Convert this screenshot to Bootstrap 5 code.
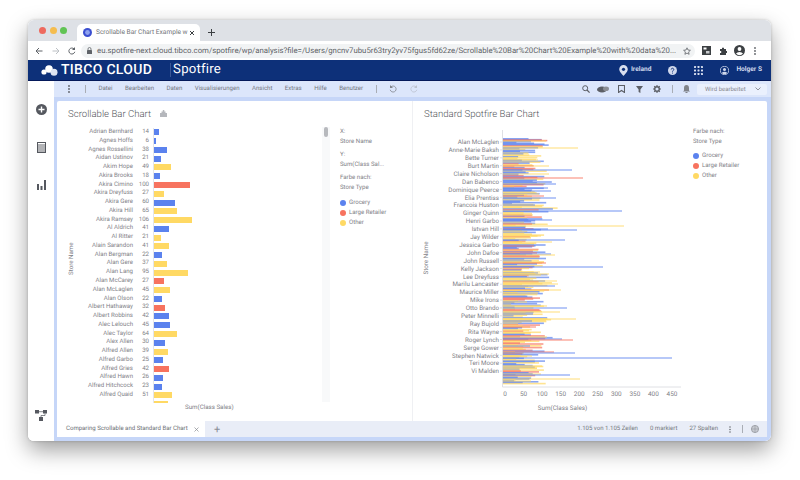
<!DOCTYPE html>
<html lang="de">

<head>
  <meta charset="UTF-8" />
  <meta name="viewport" content="width=device-width, initial-scale=1" />
  <title>Scrollable Bar Chart Example</title>
  <link href="https://cdn.jsdelivr.net/npm/bootstrap@5.3.0/dist/css/bootstrap.min.css" rel="stylesheet" />
  <style>
    html, body { height: 480px; overflow: hidden; background: #fff; }
    body { font-family: Roboto, "Liberation Sans", sans-serif; font-size: 6.1px; color: #7f8187; text-rendering: geometricPrecision; }
    svg { display: block; flex: none; }

    .win { width: 743px; height: 421px; margin: 20px 0 0 28px; border-radius: 6px; overflow: hidden; background: #fff; }
    .win-shadow { width: 743px; height: 421px; border-radius: 6px; box-shadow: 0 9px 22px rgba(0, 0, 0, .38), 0 0 3px rgba(0, 0, 0, .2); }

    /* browser chrome */
    .tabstrip { height: 21px; background: #dee1e6; padding-left: 49px; }
    .dot-light { position: absolute; top: 7px; width: 7px; height: 7px; border-radius: 50%; }
    .browser-tab { width: 123px; height: 17px; margin-top: 4px; background: #fff; border-radius: 5px 5px 0 0; padding: 0 5px 0 6px; color: #6f7378; font-size: 6.6px; white-space: nowrap; }
    .tab-name { margin-left: 4px; }
    .urlbar { height: 19px; background: #fff; padding-left: 7px; }
    .url-pill { width: 614px; height: 14px; background: #f1f3f4; border-radius: 7px; margin-left: 5px; padding-left: 6px; color: #5f6368; font-size: 7.8px; white-space: nowrap; }
    .url-text { margin-left: 5px; }

    /* tibco header */
    .top-head { height: 21px; background: #0d3079; border-bottom: 1px solid #04195a; padding-left: 13px; color: #fff; }
    .brand { font-size: 14px; font-weight: 500; letter-spacing: .3px; margin-left: 1px; line-height: 1; }
    .brand-sep { width: 1px; height: 14px; background: #3a5796; margin-left: 18px; }
    .product { font-size: 13.2px; margin-left: 2px; font-weight: 400; letter-spacing: .2px; }
    .head-right { margin-left: auto; padding-right: 9px; font-size: 6.6px; font-weight: 700; color: #cfd8ec; }

    /* app */
    .app { height: 360px; }
    .side-rail { width: 26px; background: #fff; padding-top: 23px; }
    .side-rail svg + svg { margin-top: 27px; }
    .work { width: 717px; background: #c6d6f8; }
    .menu-row { height: 16px; background: #dce6fb; color: #74777f; font-size: 6.1px; padding-left: 14px; }
    .menu-row .mi { margin-right: 12.4px; }
    .vsep { width: 1px; height: 8px; background: #a9adb5; }
    .mode-box { width: 70px; height: 11px; background: #eaf0fd; border-radius: 2px; margin: 0 4px 0 7px; padding: 0 6px 0 8px; font-size: 6px; color: #85878d; }
    .sheet { height: 320px; margin: 4px 4px 0 3px; background: #fff; border-radius: 2px 2px 0 0; }
    .viz-left { width: 356px; border-right: 1px solid #eff0f3; }
    .viz-right { flex: 1; position: relative; }
    .viz-title { font-size: 9.6px; font-weight: 300; color: #55585d; line-height: 1; padding: 9px 0 0 11px; height: 27px; white-space: nowrap; }
    .axis-y { writing-mode: vertical-rl; transform: rotate(180deg); font-size: 6.2px; width: 10px; text-align: center; margin-left: 10px; padding-top: 13px; }
    .axis-x { font-size: 6.2px; line-height: 1; margin: 0; padding-left: 128px; padding-top: 1px; }

    .rows-wrap { width: 245px; height: 275px; overflow: hidden; position: relative; }
    .rows-wrap::before { content: ""; position: absolute; left: 76px; top: 0; bottom: 0; width: 1px; background: #e4e5e9; }
    .bar-row { height: 8.77px; line-height: 8.77px; white-space: nowrap; }
    .bar-name, .bar-val { font-size: 6.1px; }
    .bar-name { width: 56px; text-align: right; flex: none; direction: rtl; }
    .bar-val { width: 16px; text-align: right; flex: none; margin-right: 5px; }
    .bar-fill { height: 6px; }
    .c-grocery { background: #5b82ee; }
    .c-retail { background: #f7735f; }
    .c-other { background: #ffd964; }

    .scroll-track { width: 8px; height: 275px; background: #f8f9fa; padding: 0 2px; flex: none; }
    .scroll-thumb { height: 10px; background: #b7b9bd; border-radius: 3px; }
    .legend-box { font-size: 6.1px; line-height: 10px; padding-left: 10px; white-space: nowrap; }
    .leg-gap { height: 3px; }
    .leg-item { height: 10.2px; }
    .leg-dot { width: 6px; height: 6px; border-radius: 50%; margin-right: 3px; flex: none; }
    .legend-right { position: absolute; left: 280px; top: 26px; }

    /* bottom tabs */
    .tabs-row { height: 16px; background: #e9edf7; font-size: 6.05px; color: #6b6e74; margin: 0 4px 0 3px; white-space: nowrap; }
    .sheet-tab { width: 148px; height: 16px; background: #fff; padding-left: 9px; }
    .sheet-plus { margin-left: 9px; color: #8b8f97; font-size: 11px; line-height: 1; }
    .status-box { margin-left: auto; padding-right: 8px; color: #777a80; }
  </style>
</head>

<body>

  <div class="win-shadow position-absolute" style="left:28px;top:20px"></div>
  <div class="win position-relative d-flex flex-column">

    <!-- Browser tabs -->
    <div class="tabstrip d-flex align-items-start position-relative">
      <span class="dot-light" style="left:11px;background:#ee6a5f"></span>
      <span class="dot-light" style="left:22px;background:#f5bd4f"></span>
      <span class="dot-light" style="left:32px;background:#61c454"></span>
      <div class="browser-tab d-flex align-items-center">
        <svg width="9" height="9" viewBox="0 0 9 9"><circle cx="4.5" cy="4.5" r="4.5" fill="#3b4fd0"/><circle cx="4.5" cy="4.5" r="2.4" fill="#8fa2ee"/></svg>
        <span class="tab-name">Scrollable Bar Chart Example w</span>
        <svg class="ms-auto" width="6" height="6" viewBox="0 0 6 6"><path d="M1 1l4 4M5 1l-4 4" stroke="#3c4043" stroke-width="1"/></svg>
      </div>
      <svg class="ms-2" style="margin-top:9px" width="7" height="7" viewBox="0 0 7 7"><path d="M3.5 0v7M0 3.5h7" stroke="#3c4043" stroke-width="1"/></svg>
    </div>

    <!-- Address bar -->
    <div class="urlbar d-flex align-items-center">
      <svg width="8" height="8" viewBox="0 0 8 8"><path d="M7.5 4H1M4 1L1 4l3 3" fill="none" stroke="#5f6368"/></svg>
      <svg style="margin-left:9px" width="8" height="8" viewBox="0 0 8 8"><path d="M.5 4H7M4 1l3 3-3 3" fill="none" stroke="#bcc0c4"/></svg>
      <svg style="margin-left:8px" width="8" height="8" viewBox="0 0 8 8"><path d="M6.8 4.8A3 3 0 1 1 6 1.9" fill="none" stroke="#5f6368"/><path d="M7 0v3H4z" fill="#5f6368"/></svg>
      <div class="url-pill d-flex align-items-center">
        <svg width="5" height="7" viewBox="0 0 5 7"><rect y="3" width="5" height="4" rx=".6" fill="#5f6368"/><path d="M1 3V2a1.5 1.5 0 0 1 3 0v1" fill="none" stroke="#5f6368" stroke-width=".8"/></svg>
        <span class="url-text">eu.spotfire-next.cloud.tibco.com/spotfire/wp/analysis?file=/Users/gncnv7ubu5r63try2yv75fgus5fd62ze/Scrollable%20Bar%20Chart%20Example%20with%20data%20...</span>
        <svg class="ms-auto me-1" width="8" height="8" viewBox="0 0 8 8"><path d="M4 .8l1 2.2 2.4.3-1.8 1.6.5 2.4L4 6.1 1.900 7.300l.5-2.400L.6 3.300 3 3z" fill="none" stroke="#5f6368" stroke-width=".8"/></svg>
      </div>
      <svg style="margin-left:7px" width="9" height="9" viewBox="0 0 9 9"><rect width="9" height="9" fill="#3c4043"/><rect x="1.500" y="1.500" width="3" height="2" fill="#fff"/><rect x="4" y="5" width="3.500" height="2.500" fill="#c9cbce"/></svg>
      <svg style="margin-left:8px" width="8" height="8" viewBox="0 0 8 8"><path d="M1 2h2V.8h2V2h2v2h1v2H7v2H1V6h1.200V4H1z" fill="#3c4043"/></svg>
      <svg style="margin-left:7px" width="11" height="11" viewBox="0 0 11 11"><circle cx="5.500" cy="5.500" r="5.500" fill="#3c4043"/><circle cx="5.500" cy="4" r="1.900" fill="#fff"/><path d="M2 8.500a4 3 0 0 1 7 0 4.500 4.500 0 0 1-7 0z" fill="#fff"/></svg>
      <svg style="margin-left:9px" width="2" height="8" viewBox="0 0 2 8"><circle cx="1" cy="1" r=".9" fill="#5f6368"/><circle cx="1" cy="4" r=".9" fill="#5f6368"/><circle cx="1" cy="7" r=".9" fill="#5f6368"/></svg>
    </div>

    <!-- TIBCO header -->
    <div class="top-head d-flex align-items-center">
      <svg width="19" height="11" viewBox="0 0 19 11"><circle cx="3" cy="7" r="2.600" fill="#fff"/><circle cx="8" cy="4" r="3.800" fill="#fff"/><circle cx="13" cy="7.200" r="3.500" fill="#dfe5f2"/></svg>
      <span class="brand">TIBCO CLOUD</span>
      <span class="brand-sep"></span>
      <span class="product">Spotfire</span>
      <div class="head-right d-flex align-items-center">
        <svg width="9" height="11" viewBox="0 0 9 11"><path d="M4.500 0a4.300 4.300 0 0 1 4.300 4.300C8.800 7 4.500 11 4.500 11S.2 7 .2 4.300A4.300 4.300 0 0 1 4.500 0z" fill="#d8dfef"/><circle cx="4.500" cy="4.300" r="1.600" fill="#0d3079"/></svg>
        <span style="margin-left:3px">Ireland</span>
        <svg style="margin-left:17px" width="9" height="9" viewBox="0 0 9 9"><circle cx="4.500" cy="4.500" r="4.500" fill="#cfd8ec"/><path d="M3.200 3.500a1.300 1.300 0 1 1 1.900 1.200c-.4.200-.6.400-.6.900" fill="none" stroke="#0d3079" stroke-width=".9"/><circle cx="4.500" cy="7" r=".55" fill="#0d3079"/></svg>
        <svg style="margin-left:17px" width="9" height="9" viewBox="0 0 9 9" fill="#d8dfef"><rect width="2" height="2" rx=".4"/><rect x="3.500" width="2" height="2" rx=".4"/><rect x="7" width="2" height="2" rx=".4"/><rect y="3.500" width="2" height="2" rx=".4"/><rect x="3.500" y="3.500" width="2" height="2" rx=".4"/><rect x="7" y="3.500" width="2" height="2" rx=".4"/><rect y="7" width="2" height="2" rx=".4"/><rect x="3.500" y="7" width="2" height="2" rx=".4"/><rect x="7" y="7" width="2" height="2" rx=".4"/></svg>
        <svg style="margin-left:17px" width="9" height="9" viewBox="0 0 9 9"><circle cx="4.500" cy="4.500" r="4.100" fill="none" stroke="#cfd8ec" stroke-width=".8"/><circle cx="4.500" cy="3.500" r="1.500" fill="#cfd8ec"/><path d="M1.800 7a3 2.200 0 0 1 5.400 0 3.800 3.800 0 0 1-5.400 0z" fill="#cfd8ec"/></svg>
        <span style="margin-left:7px">Holger S</span>
      </div>
    </div>

    <div class="app d-flex">

      <!-- Left rail -->
      <div class="side-rail d-flex flex-column align-items-center position-relative">
        <svg width="11" height="11" viewBox="0 0 11 11"><circle cx="5.500" cy="5.500" r="5.500" fill="#55585f"/><path d="M5.500 2.500v6M2.500 5.500h6" stroke="#fff" stroke-width="1.400"/></svg>
        <svg width="9" height="11" viewBox="0 0 9 11"><rect x=".5" y=".5" width="8" height="10" fill="none" stroke="#55585f"/><path d="M.5 3h8M.5 5h8M.5 7h8M.5 9h8" stroke="#55585f" stroke-width=".9"/></svg>
        <svg width="9" height="10" viewBox="0 0 9 10" fill="#55585f"><rect y="4" width="2" height="6"/><rect x="3.500" y="6" width="2" height="4"/><rect x="7" width="2" height="10"/></svg>
        <svg class="position-absolute" style="left:7px;bottom:20px;margin:0" width="12" height="11" viewBox="0 0 12 11"><g fill="#55585f"><rect width="4" height="3.500"/><rect x="8" width="4" height="3.500"/><rect x="4" y="7" width="4" height="4"/></g><path d="M4 1.700h4M10 3.500v2H6v1.500" fill="none" stroke="#55585f" stroke-width=".7"/></svg>
      </div>

      <div class="work d-flex flex-column">

        <!-- Menu -->
        <div class="menu-row d-flex align-items-center">
          <svg width="2" height="8" viewBox="0 0 2 8"><circle cx="1" cy="1" r=".9" fill="#5c5f66"/><circle cx="1" cy="4" r=".9" fill="#5c5f66"/><circle cx="1" cy="7" r=".9" fill="#5c5f66"/></svg>
          <span class="vsep" style="margin:0 12.500px 0 15px"></span>
          <span class="mi">Datei</span><span class="mi">Bearbeiten</span><span class="mi">Daten</span><span class="mi">Visualisierungen</span><span class="mi">Ansicht</span><span class="mi">Extras</span><span class="mi">Hilfe</span><span class="mi">Benutzer</span>
          <span class="vsep"></span>
          <svg style="margin-left:12px" width="8" height="8" viewBox="0 0 8 8"><path d="M1.200 4.800A3 3 0 1 0 2 1.900" fill="none" stroke="#82858c" stroke-width=".8"/><path d="M1 0v3h3z" fill="#82858c"/></svg>
          <svg style="margin-left:13px" width="8" height="8" viewBox="0 0 8 8"><path d="M6.800 4.800A3 3 0 1 1 6 1.900" fill="none" stroke="#bcc2cf" stroke-width=".8"/><path d="M7 0v3H4z" fill="#bcc2cf"/></svg>

          <div class="ms-auto d-flex align-items-center">
            <svg width="8" height="8" viewBox="0 0 8 8"><circle cx="3.200" cy="3.200" r="2.500" fill="none" stroke="#5c5f66" stroke-width="1"/><path d="M5 5l2.600 2.600" stroke="#5c5f66" stroke-width="1.200"/></svg>
            <svg style="margin-left:7px" width="12" height="7" viewBox="0 0 12 7"><ellipse cx="5" cy="3.500" rx="5" ry="3" fill="#5c5f66"/><ellipse cx="9" cy="2.800" rx="3" ry="2.300" fill="#8b8e95"/></svg>
            <svg style="margin-left:9px" width="7" height="8" viewBox="0 0 7 8"><path d="M.5.500h6v7L3.500 5.500.5 7.500z" fill="none" stroke="#5c5f66" stroke-width="1.100"/></svg>
            <svg style="margin-left:11px" width="7" height="7" viewBox="0 0 7 7"><path d="M0 0h7L4.400 3.400V7L2.600 6V3.400z" fill="#5c5f66"/></svg>
            <svg style="margin-left:10px" width="8" height="8" viewBox="0 0 8 8"><circle cx="4" cy="4" r="2.300" fill="none" stroke="#5c5f66" stroke-width="1.400"/><path d="M4 0v1.500M4 6.500V8M0 4h1.500M6.500 4H8M1.200 1.200l1 1M5.800 5.800l1 1M6.800 1.200l-1 1M2.200 5.800l-1 1" stroke="#5c5f66" stroke-width="1.100"/></svg>
            <span class="vsep" style="margin-left:11px"></span>
            <svg style="margin-left:10px" width="7" height="8" viewBox="0 0 7 8"><path d="M3.500 0C5.200 0 6 1.300 6 3v2.500l1 1H0l1-1V3C1 1.300 1.800 0 3.500 0z" fill="#80838a"/><rect x="2.500" y="7" width="2" height="1" fill="#80838a"/></svg>
            <div class="mode-box d-flex align-items-center justify-content-between">
              <span>Wird bearbeitet</span>
              <svg width="6" height="4" viewBox="0 0 6 4"><path d="M.5.500L3 3 5.500.500" fill="none" stroke="#777a80" stroke-width=".8"/></svg>
            </div>
          </div>
        </div>

        <div class="sheet d-flex">

          <!-- Scrollable chart -->
          <div class="viz-left d-flex">
            <div style="width:265px">
              <div class="viz-title d-flex align-items-start">Scrollable Bar Chart
                <svg style="margin-left:9px" width="7" height="7" viewBox="0 0 7 7"><path d="M0 3h1.500V1.500h1.300V0h1.500v1.500h1.200V3H7v4H0z" fill="#b5b7bc"/></svg>
              </div>
              <div class="d-flex">
                <div class="axis-y">Store Name</div>
                <div class="rows-wrap" id="filas"></div>
              </div>
              <p class="axis-x">Sum(Class Sales)</p>
            </div>
            <div style="padding-top:26px"><div class="scroll-track"><div class="scroll-thumb"></div></div></div>
            <div class="legend-box" style="padding-top:26px">
              <div>X:</div><div>Store Name</div><div class="leg-gap"></div>
              <div>Y:</div><div>Sum(Class Sal...</div><div class="leg-gap"></div>
              <div>Farbe nach:</div><div>Store Type</div>
              <div style="height:5px"></div>
              <div class="leg-item d-flex align-items-center"><span class="leg-dot c-grocery"></span>Grocery</div>
              <div class="leg-item d-flex align-items-center"><span class="leg-dot c-retail"></span>Large Retailer</div>
              <div class="leg-item d-flex align-items-center"><span class="leg-dot c-other"></span>Other</div>
            </div>
          </div>

          <!-- Standard chart -->
          <div class="viz-right">
            <div class="viz-title">Standard Spotfire Bar Chart</div>
            <svg id="grafico" class="position-absolute" style="left:10px;top:24px" width="270" height="290" viewBox="424 125 270 290"></svg>
            <div class="legend-box legend-right" style="padding-left:0">
              <div>Farbe nach:</div><div>Store Type</div>
              <div style="height:4px"></div>
              <div class="leg-item d-flex align-items-center"><span class="leg-dot c-grocery"></span>Grocery</div>
              <div class="leg-item d-flex align-items-center"><span class="leg-dot c-retail"></span>Large Retailer</div>
              <div class="leg-item d-flex align-items-center"><span class="leg-dot c-other"></span>Other</div>
            </div>
          </div>
        </div>

        <!-- Page tabs and status -->
        <div class="tabs-row d-flex align-items-center">
          <div class="sheet-tab d-flex align-items-center">
            <span>Comparing Scrollable and Standard Bar Chart</span>
            <svg style="margin-left:6px" width="5" height="5" viewBox="0 0 5 5"><path d="M.5.500l4 4M4.500.500l-4 4" stroke="#888b91" stroke-width=".7"/></svg>
          </div>
          <span class="sheet-plus">+</span>
          <div class="status-box d-flex align-items-center">
            <span>1.105 von 1.105 Zeilen</span>
            <span style="margin-left:12px">0 markiert</span>
            <span style="margin-left:12px">27 Spalten</span>
            <svg style="margin-left:11px" width="2" height="7" viewBox="0 0 2 7"><circle cx="1" cy="1" r=".8" fill="#6b6e74"/><circle cx="1" cy="3.500" r=".8" fill="#6b6e74"/><circle cx="1" cy="6" r=".8" fill="#6b6e74"/></svg>
            <span class="vsep" style="margin-left:11px"></span>
            <svg style="margin-left:8px" width="8" height="8" viewBox="0 0 8 8"><circle cx="4" cy="4" r="3.600" fill="#c9ccd2" stroke="#8b8e95" stroke-width=".7"/><path d="M4 .5v7M.5 4h7" stroke="#8b8e95" stroke-width=".5"/></svg>
          </div>
        </div>
      </div>
    </div>
  </div>

  <script>
    // Datos del gráfico con scroll: nombre, valor, tipo
    const filas = [
      ['Adrian Bernhard', 14, 'g'], ['Agnes Hoffs', 6, 'g'], ['Agnes Rossellini', 38, 'g'], ['Aidan Ustinov', 21, 'g'],
      ['Akim Hope', 49, 'o'], ['Akira Brooks', 18, 'g'], ['Akira Cimino', 100, 'r'], ['Akira Dreyfuss', 27, 'o'],
      ['Akira Gere', 60, 'g'], ['Akira Hill', 65, 'o'], ['Akira Ramsey', 106, 'o'], ['Al Aldrich', 41, 'g'],
      ['Al Ritter', 21, 'o'], ['Alain Sarandon', 41, 'o'], ['Alan Bergman', 22, 'g'], ['Alan Gere', 37, 'o'],
      ['Alan Lang', 95, 'o'], ['Alan McCarey', 27, 'r'], ['Alan McLaglen', 45, 'o'], ['Alan Olson', 22, 'g'],
      ['Albert Hathaway', 32, 'r'], ['Albert Robbins', 42, 'g'], ['Alec Lelouch', 45, 'g'], ['Alec Taylor', 64, 'o'],
      ['Alex Allen', 30, 'g'], ['Alfred Allen', 39, 'o'], ['Alfred Garbo', 25, 'g'], ['Alfred Gries', 42, 'r'],
      ['Alfred Hawn', 26, 'g'], ['Alfred Hitchcock', 23, 'g'], ['Alfred Quaid', 51, 'o'], ['', '', 'o']
    ];
    const clases = { g: 'c-grocery', r: 'c-retail', o: 'c-other' };
    const cont = document.getElementById('filas');
    filas.forEach(f => {
      const ancho = (f[0] ? f[1] : 40) * 0.355;
      const div = document.createElement('div');
      div.className = 'bar-row d-flex align-items-center';
      div.innerHTML = `<span class="bar-name" dir="ltr">${f[0]}</span><span class="bar-val">${f[1]}</span><span class="bar-fill ${clases[f[2]]}" style="width:${ancho}px"></span>`;
      cont.appendChild(div);
    });

    // Gráfico estándar
    const colores = { g: '#5b82ee', r: '#f7735f', o: '#ffd964' };
    const nombres = ['Alan McLaglen', 'Anne-Marie Baksh', 'Bette Turner', 'Burt Martin', 'Claire Nicholson', 'Dan Babenco',
      'Dominique Peerce', 'Elia Prentiss', 'Francois Huston', 'Ginger Quinn', 'Henri Garbo', 'Istvan Hill', 'Jay Wilder',
      'Jessica Garbo', 'John Dafoe', 'John Russell', 'Kelly Jackson', 'Lee Dreyfuss', 'Marilu Lancaster', 'Maurice Miller',
      'Mike Irons', 'Otto Brando', 'Peter Minnelli', 'Ray Bujold', 'Rita Wayne', 'Roger Lynch', 'Serge Gower',
      'Stephen Natwick', 'Teri Moore', 'Vi Malden'];
    // y, fin en x, color (barras largas)
    const largas = [[140, 543, 'r'], [141, 547, 'o'], [148, 579, 'o'], [160, 539, 'o'], [166, 550, 'o'], [170, 573, 'g'], [174, 550, 'o'], [178, 584, 'r'],
      [184, 557, 'g'], [188, 549, 'g'], [191, 552, 'g'], [194, 540, 'o'], [198, 557, 'g'], [196, 545, 'r'], [205, 536, 'g'], [211, 623, 'g'], [215, 534, 'o'],
      [220, 553, 'g'], [224, 533, 'r'], [226, 625, 'o'], [229, 549, 'g'], [230, 578, 'g'], [236, 542, 'o'], [240, 566, 'g'], [242, 553, 'o'], [246, 535, 'r'], [253, 538, 'r'],
      [254, 552, 'g'], [255, 556, 'o'], [262, 545, 'o'], [263, 547, 'r'], [267, 604, 'g'], [272, 541, 'o'], [274, 550, 'o'],
      [275, 542, 'o'], [281, 558, 'o'], [284, 559, 'o'], [286, 556, 'g'], [290, 562, 'o'], [293, 539, 'o'], [302, 528, 'o'], [306, 548, 'o'], [308, 568, 'g'],
      [312, 561, 'o'], [314, 534, 'g'], [319, 577, 'o'], [321, 533, 'g'], [327, 537, 'r'], [333, 532, 'o'], [337, 548, 'o'], [339, 563, 'g'], [340, 574, 'r'],
      [346, 531, 'g'], [352, 555, 'r'], [353, 576, 'g'], [356, 533, 'o'], [358, 673, 'g'], [366, 543, 'o'], [368, 538, 'o'], [374, 542, 'o'], [375, 571, 'g'], [379, 581, 'o'], [381, 532, 'o']];

    let semilla = 17;
    function azar() {
      semilla = (semilla * 16807) % 2147483647;
      return semilla / 2147483647;
    }

    let svg = '';
    // barras cortas superpuestas
    for (let y = 138; y < 383; y += 0.9) {
      const r = azar();
      const tipo = r < 0.42 ? 'g' : (r < 0.58 ? 'r' : 'o');
      const ancho = 8 + azar() * 34 + azar() * azar() * 14;
      svg += `<rect x="504" y="${y}" width="${ancho.toFixed(1)}" height="1.6" fill="${colores[tipo]}" opacity=".7"/>`;
    }
    largas.forEach(b => {
      svg += `<rect x="504" y="${b[0] - 0.8}" width="${b[1] - 504}" height="1.6" fill="${colores[b[2]]}" opacity=".55"/>`;
    });
    // ejes
    svg += '<path d="M503.500 130V387H682" fill="none" stroke="#dfe0e4" stroke-width="1"/>';
    nombres.forEach((n, i) => {
      const y = 142 + i * 7.9;
      svg += `<text x="500" y="${y + 2.2}" text-anchor="end" font-size="6.25" font-family="Roboto" fill="#7f8187">${n}</text>`;
      svg += `<path d="M501 ${y}h2" stroke="#d5d6da" stroke-width=".7"/>`;
    });
    for (let i = 0; i <= 9; i++) {
      svg += `<text x="${506 + i * 18.55}" y="396" text-anchor="middle" font-size="6.4" font-family="Roboto" fill="#7f8187">${i * 50}</text>`;
    }
    svg += '<text x="563.500" y="410" text-anchor="middle" font-size="6.3" font-family="Roboto" fill="#7f8187">Sum(Class Sales)</text>';
    svg += '<text transform="translate(429 258) rotate(-90)" text-anchor="middle" font-size="6.3" font-family="Roboto" fill="#7f8187">Store Name</text>';
    document.getElementById('grafico').innerHTML = svg;
  </script>

  <script src="https://cdn.jsdelivr.net/npm/bootstrap@5.3.0/dist/js/bootstrap.bundle.min.js"></script>
</body>

</html>
